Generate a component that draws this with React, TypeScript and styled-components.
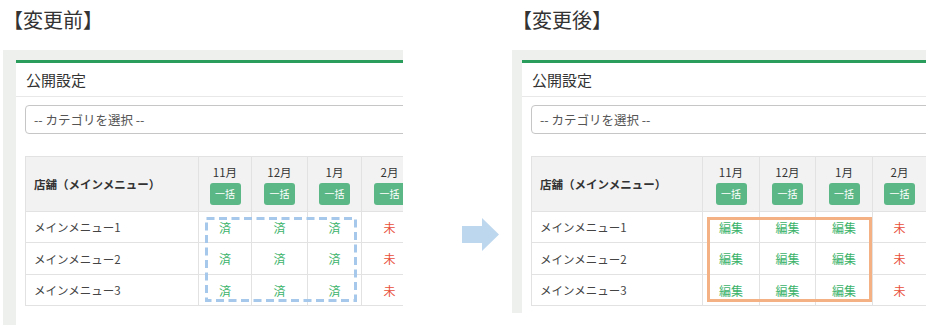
import styled, { createGlobalStyle } from "styled-components";

const GlobalStyle = createGlobalStyle`
  body {
    margin: 0;
    background: #fff;
    font-family: "Noto Sans CJK JP", "Noto Sans", sans-serif;
    color: #333;
  }
`;

type Status = "done" | "edit" | "todo";

interface PanelSpec {
  title: string;
  width: number;
  height: number;
  inset: number;
  columns: number[];
  cells: Status;
  mark: "dashed" | "solid";
}

const months = ["11月", "12月", "1月", "2月"];
const rows = ["メインメニュー1", "メインメニュー2", "メインメニュー3"];

const Page = styled.div`
  display: flex;
  align-items: flex-start;
  width: 951px;
  height: 330px;
  padding-left: 3px;
  box-sizing: border-box;
  overflow: hidden;
`;

const Section = styled.section<{ $width: number }>`
  flex-shrink: 0;
  width: ${(p) => p.$width}px;
`;

const Heading = styled.h2`
  margin: 0 0 10px;
  height: 40px;
  line-height: 40px;
  font-size: 20px;
  font-weight: 400;
  color: #333;
`;

const Panel = styled.div<{ $height: number; $inset: number }>`
  height: ${(p) => p.$height}px;
  padding: 10px 0 0 ${(p) => p.$inset}px;
  box-sizing: border-box;
  background: #eef0ee;
  overflow: hidden;
`;

const Card = styled.div`
  width: 560px;
  height: 100%;
  background: #fff;
  border-top: 3px solid #2a9d5c;
`;

const CardHeader = styled.div`
  display: flex;
  align-items: center;
  height: 33px;
  padding-left: 10px;
  font-size: 15px;
  color: #333;
  border-bottom: 1px solid #e8e8e8;
`;

const CardBody = styled.div`
  padding: 8px 0 0 9px;
`;

const Select = styled.div`
  display: flex;
  align-items: center;
  width: 600px;
  height: 29px;
  padding-left: 8px;
  box-sizing: border-box;
  border: 1px solid #c6c6c6;
  border-radius: 4px;
  font-size: 12.5px;
  color: #555;
`;

const TableWrap = styled.div`
  position: relative;
  margin-top: 22px;
`;

const Table = styled.table`
  border-collapse: collapse;
  table-layout: fixed;
  border: 1px solid #e2e2e2;
`;

const HeadCell = styled.th<{ $label?: boolean }>`
  height: 54px;
  padding: 0 0 0 ${(p) => (p.$label ? 8 : 0)}px;
  background: #f2f2f2;
  border: 1px solid #e2e2e2;
  text-align: ${(p) => (p.$label ? "left" : "center")};
  vertical-align: middle;
  font-size: 11.5px;
  font-weight: ${(p) => (p.$label ? 700 : 400)};
  color: #333;
`;

const MonthStack = styled.div`
  display: flex;
  flex-direction: column;
  align-items: center;
  gap: 3px;
`;

const BulkButton = styled.span`
  display: flex;
  align-items: center;
  justify-content: center;
  width: 31px;
  height: 22px;
  border-radius: 3px;
  background: #5bb785;
  color: #fff;
  font-size: 10px;
`;

const Row = styled.tr<{ $h: number }>`
  height: ${(p) => p.$h}px;
`;

const LabelCell = styled.td`
  padding-left: 8px;
  border: 1px solid #e2e2e2;
  font-size: 11.5px;
  color: #444;
`;

const StatusCell = styled.td<{ $status: Status }>`
  padding: 0;
  border: 1px solid #e2e2e2;
  text-align: center;
  font-size: 12px;
  color: ${(p) => (p.$status === "todo" ? "#e8503a" : "#3bb36a")};
`;

const Mark = styled.svg`
  position: absolute;
  pointer-events: none;
`;

const ArrowBox = styled.div`
  flex-shrink: 0;
  margin: 218px 13px 0 59px;
  width: 37px;
  height: 33px;
`;

const statusText: Record<Status, string> = {
  done: "済",
  edit: "編集",
  todo: "未",
};

function Highlight({ kind, left, top, width, height }: {
  kind: "dashed" | "solid";
  left: number;
  top: number;
  width: number;
  height: number;
}) {
  const dashed = kind === "dashed";
  return (
    <Mark
      width={width}
      height={height}
      style={{ left, top }}
      viewBox={`0 0 ${width} ${height}`}
    >
      <rect
        x={1.5}
        y={1.5}
        width={width - 3}
        height={height - 3}
        fill="none"
        stroke={dashed ? "#a6c8ea" : "#f4b183"}
        strokeWidth={3}
        strokeDasharray={dashed ? "8 4.5" : undefined}
      />
    </Mark>
  );
}

function SettingsPanel({ spec }: { spec: PanelSpec }) {
  const [labelW, ...monthW] = spec.columns;
  const markLeft = spec.mark === "dashed" ? 180 : 176;
  const markWidth = spec.mark === "dashed" ? 152 : 165;
  return (
    <Section $width={spec.width}>
      <Heading>{spec.title}</Heading>
      <Panel $height={spec.height} $inset={spec.inset}>
        <Card>
          <CardHeader>公開設定</CardHeader>
          <CardBody>
            <Select>-- カテゴリを選択 --</Select>
            <TableWrap>
              <Table>
                <colgroup>
                  <col style={{ width: labelW }} />
                  {monthW.map((w, i) => (
                    <col key={i} style={{ width: w }} />
                  ))}
                </colgroup>
                <thead>
                  <tr>
                    <HeadCell $label>店舗（メインメニュー）</HeadCell>
                    {months.map((m) => (
                      <HeadCell key={m}>
                        <MonthStack>
                          <span>{m}</span>
                          <BulkButton>一括</BulkButton>
                        </MonthStack>
                      </HeadCell>
                    ))}
                  </tr>
                </thead>
                <tbody>
                  {rows.map((r, ri) => (
                    <Row key={r} $h={ri === 1 ? 32 : 31}>
                      <LabelCell>{r}</LabelCell>
                      {months.map((m, mi) => {
                        const s: Status = mi === 3 ? "todo" : spec.cells;
                        return (
                          <StatusCell key={m} $status={s}>
                            {statusText[s]}
                          </StatusCell>
                        );
                      })}
                    </Row>
                  ))}
                </tbody>
              </Table>
              <Highlight
                kind={spec.mark}
                left={markLeft}
                top={61}
                width={markWidth}
                height={85}
              />
            </TableWrap>
          </CardBody>
        </Card>
      </Panel>
    </Section>
  );
}

const before: PanelSpec = {
  title: "【変更前】",
  width: 400,
  height: 275,
  inset: 13,
  columns: [173, 53, 56, 54, 56],
  cells: "done",
  mark: "dashed",
};

const after: PanelSpec = {
  title: "【変更後】",
  width: 414,
  height: 263,
  inset: 10,
  columns: [171, 57, 56, 57, 54],
  cells: "edit",
  mark: "solid",
};

export default function App() {
  return (
    <>
      <GlobalStyle />
      <Page>
        <SettingsPanel spec={before} />
        <ArrowBox>
          <svg width="37" height="33" viewBox="0 0 37 33">
            <polygon
              points="0,8 20,8 20,0 37,16.5 20,33 20,25 0,25"
              fill="#bdd7ee"
            />
          </svg>
        </ArrowBox>
        <SettingsPanel spec={after} />
      </Page>
    </>
  );
}
